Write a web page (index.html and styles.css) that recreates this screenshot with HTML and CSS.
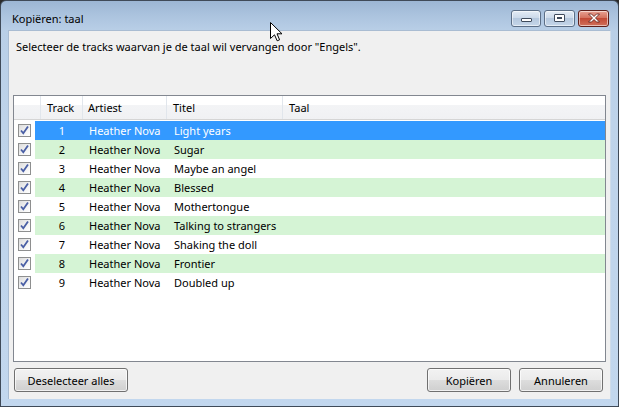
FILE: index.html
```html
<!DOCTYPE html>
<html lang="nl">
<head>
<meta charset="utf-8">
<title>Kopiëren: taal</title>
<link rel="stylesheet" href="styles.css">
</head>
<body>
<div class="window">
  <div class="titlebar">
    <span class="title">Kopiëren: taal</span>
    <div class="caption-buttons">
      <div class="cb cb-min"><span class="glyph-min"></span></div>
      <div class="cb cb-max"><span class="glyph-max"></span></div>
      <div class="cb cb-close">
        <svg width="14" height="10" viewBox="0 0 14 10"><path d="M1.5 1 L4.5 1 L7 3.5 L9.5 1 L12.5 1 L8.5 5 L12.5 9 L9.5 9 L7 6.5 L4.5 9 L1.5 9 L5.5 5 Z" fill="#fff" stroke="#5a1a14" stroke-width="0.8" stroke-linejoin="round"/></svg>
      </div>
    </div>
  </div>
  <div class="client">
    <p class="prompt">Selecteer de tracks waarvan je de taal wil vervangen door "Engels".</p>
    <div class="list">
      <div class="header">
        <div class="hc hc-check"></div>
        <div class="hc hc-track">Track</div>
        <div class="hc hc-artist">Artiest</div>
        <div class="hc hc-title">Titel</div>
        <div class="hc hc-lang">Taal</div>
      </div>
      <div class="rows">
        <div class="row selected">
          <div class="c-check"><span class="box"><svg width="11" height="11" viewBox="0 0 11 11"><path d="M2 5.5 L4.3 8.3 L9 1.5" fill="none" stroke="#4a5fa5" stroke-width="1.8"/></svg></span></div>
          <div class="c-track">1</div><div class="c-artist">Heather Nova</div><div class="c-title">Light years</div><div class="c-lang"></div>
        </div>
        <div class="row alt">
          <div class="c-check"><span class="box"><svg width="11" height="11" viewBox="0 0 11 11"><path d="M2 5.5 L4.3 8.3 L9 1.5" fill="none" stroke="#4a5fa5" stroke-width="1.8"/></svg></span></div>
          <div class="c-track">2</div><div class="c-artist">Heather Nova</div><div class="c-title">Sugar</div><div class="c-lang"></div>
        </div>
        <div class="row">
          <div class="c-check"><span class="box"><svg width="11" height="11" viewBox="0 0 11 11"><path d="M2 5.5 L4.3 8.3 L9 1.5" fill="none" stroke="#4a5fa5" stroke-width="1.8"/></svg></span></div>
          <div class="c-track">3</div><div class="c-artist">Heather Nova</div><div class="c-title">Maybe an angel</div><div class="c-lang"></div>
        </div>
        <div class="row alt">
          <div class="c-check"><span class="box"><svg width="11" height="11" viewBox="0 0 11 11"><path d="M2 5.5 L4.3 8.3 L9 1.5" fill="none" stroke="#4a5fa5" stroke-width="1.8"/></svg></span></div>
          <div class="c-track">4</div><div class="c-artist">Heather Nova</div><div class="c-title">Blessed</div><div class="c-lang"></div>
        </div>
        <div class="row">
          <div class="c-check"><span class="box"><svg width="11" height="11" viewBox="0 0 11 11"><path d="M2 5.5 L4.3 8.3 L9 1.5" fill="none" stroke="#4a5fa5" stroke-width="1.8"/></svg></span></div>
          <div class="c-track">5</div><div class="c-artist">Heather Nova</div><div class="c-title">Mothertongue</div><div class="c-lang"></div>
        </div>
        <div class="row alt">
          <div class="c-check"><span class="box"><svg width="11" height="11" viewBox="0 0 11 11"><path d="M2 5.5 L4.3 8.3 L9 1.5" fill="none" stroke="#4a5fa5" stroke-width="1.8"/></svg></span></div>
          <div class="c-track">6</div><div class="c-artist">Heather Nova</div><div class="c-title">Talking to strangers</div><div class="c-lang"></div>
        </div>
        <div class="row">
          <div class="c-check"><span class="box"><svg width="11" height="11" viewBox="0 0 11 11"><path d="M2 5.5 L4.3 8.3 L9 1.5" fill="none" stroke="#4a5fa5" stroke-width="1.8"/></svg></span></div>
          <div class="c-track">7</div><div class="c-artist">Heather Nova</div><div class="c-title">Shaking the doll</div><div class="c-lang"></div>
        </div>
        <div class="row alt">
          <div class="c-check"><span class="box"><svg width="11" height="11" viewBox="0 0 11 11"><path d="M2 5.5 L4.3 8.3 L9 1.5" fill="none" stroke="#4a5fa5" stroke-width="1.8"/></svg></span></div>
          <div class="c-track">8</div><div class="c-artist">Heather Nova</div><div class="c-title">Frontier</div><div class="c-lang"></div>
        </div>
        <div class="row">
          <div class="c-check"><span class="box"><svg width="11" height="11" viewBox="0 0 11 11"><path d="M2 5.5 L4.3 8.3 L9 1.5" fill="none" stroke="#4a5fa5" stroke-width="1.8"/></svg></span></div>
          <div class="c-track">9</div><div class="c-artist">Heather Nova</div><div class="c-title">Doubled up</div><div class="c-lang"></div>
        </div>
      </div>
    </div>
    <div class="buttons">
      <button class="btn btn-wide">Deselecteer alles</button>
      <span class="spacer"></span>
      <button class="btn">Kopiëren</button>
      <button class="btn">Annuleren</button>
    </div>
  </div>
</div>
<svg class="cursor" width="13" height="20" viewBox="0 0 13 20"><path d="M0.5 0.5 L0.5 16.5 L4.5 12.8 L7.2 18.8 L9.6 17.8 L7 11.8 L12 11.8 Z" fill="#fff" stroke="#000" stroke-width="1" stroke-linejoin="miter"/></svg>
</body>
</html>
```
FILE: styles.css
```css
* { box-sizing: border-box; }
html, body {
  margin: 0;
  padding: 0;
  width: 619px;
  height: 407px;
  overflow: hidden;
  background: #2b2b2b;
  font-family: "Noto Sans", "Open Sans", "DejaVu Sans", sans-serif;
  font-size: 11px;
  color: #000;
}
.window {
  position: relative;
  width: 619px;
  height: 407px;
  border: 1px solid #3f4a58;
  border-radius: 6px 6px 0 0;
  background: linear-gradient(to bottom, #9cb6d4 0px, #abc3de 14px, #b9cfe7 30px, #bed3ea 120px, #c2d7ee 407px);
  display: flex;
  flex-direction: column;
}
.titlebar {
  height: 29px;
  padding: 5px 9px 0 11px;
  display: flex;
  align-items: center;
}
.title {
  flex: 1;
  font-size: 11px;
  color: #000;
}
.caption-buttons {
  display: flex;
  gap: 3px;
  align-items: center;
}
.cb {
  height: 17px;
  border: 1px solid #5b6e86;
  border-radius: 3px;
  display: flex;
  align-items: center;
  justify-content: center;
  background: linear-gradient(to bottom, #e4ecf5 0%, #ccdaea 45%, #b5c8de 50%, #c5d6e9 100%);
  box-shadow: inset 0 0 0 1px rgba(255,255,255,0.55);
}
.cb-min { width: 30px; }
.cb-max { width: 31px; }
.cb-close {
  width: 31px;
  border-color: #5e1f1a;
  background: linear-gradient(to bottom, #e8a293 0%, #d4725f 45%, #c24a36 50%, #d0705b 100%);
}
.glyph-min {
  display: block;
  width: 11px;
  height: 4px;
  margin-top: 4px;
  background: #fff;
  border: 1px solid #3f4b5c;
  border-radius: 1px;
}
.glyph-max {
  display: block;
  width: 11px;
  height: 8px;
  border: 1px solid #3f4b5c;
  background: #fff;
  box-shadow: inset 0 0 0 2px #fff, inset 0 0 0 3px #3f4b5c;
  border-radius: 1px;
}
.client {
  flex: 1;
  margin: 0 7px 7px 7px;
  background: #f0f0f0;
  border: 1px solid #a9bcd2;
  border-bottom: none;
  border-right-color: #cfdcea;
  padding: 8px 4px 7px 4px;
  display: flex;
  flex-direction: column;
}
.prompt {
  margin: 0 0 40px 3px;
  line-height: 16px;
  height: 16px;
  white-space: nowrap;
}
.list {
  height: 267px;
  background: #fff;
  border: 1px solid #828790;
  display: flex;
  flex-direction: column;
}
.header {
  height: 24px;
  display: flex;
  border-bottom: 1px solid #d5d5d5;
  background: linear-gradient(to bottom, #ffffff 0%, #ffffff 40%, #f3f4f6 41%, #f0f1f3 100%);
  margin-bottom: 1px;
}
.hc {
  height: 23px;
  line-height: 23px;
  border-right: 1px solid #e1e6ec;
  white-space: nowrap;
}
.hc-check { width: 27px; }
.hc-track { width: 42px; padding-left: 6px; }
.hc-artist { width: 84px; padding-left: 5px; }
.hc-title { width: 116px; padding-left: 6px; }
.hc-lang { flex: 1; padding-left: 6px; border-right: none; }
.rows { display: flex; flex-direction: column; }
.row {
  height: 19px;
  display: flex;
  line-height: 19px;
  white-space: nowrap;
}
.row > div { height: 19px; }
.row.alt > div:not(.c-check) { background: #d5f4d5; }
.row.selected > div:not(.c-check) { background: #3399ff; color: #fff; }
.c-check {
  width: 21px;
  padding: 3px 0 0 4px;
  background: #fff;
}
.box {
  display: flex;
  width: 13px;
  height: 13px;
  border: 1px solid #8e8f8f;
  background: linear-gradient(135deg, #dcdcdc 0%, #f4f4f4 60%, #ffffff 100%);
  align-items: center;
  justify-content: center;
}
.box svg { display: block; }
.c-track { width: 48px; text-align: center; padding-left: 6px; }
.c-artist { width: 84px; padding-left: 6px; }
.c-title { width: 116px; padding-left: 7px; }
.c-lang { flex: 1; }
.buttons {
  margin-top: 6px;
  height: 24px;
  display: flex;
  gap: 8px;
  padding: 0 3px 0 1px;
}
.spacer { flex: 1; }
.btn {
  width: 84px;
  height: 24px;
  font-family: inherit;
  font-size: 11px;
  color: #000;
  border: 1px solid #707070;
  border-radius: 3px;
  padding: 0;
  background: linear-gradient(to bottom, #f2f2f2 0%, #ebebeb 48%, #dddddd 50%, #cfcfcf 100%);
  box-shadow: inset 0 0 0 1px rgba(255,255,255,0.7);
}
.btn-wide { width: 114px; }
.cursor {
  position: absolute;
  left: 270px;
  top: 22px;
}
```
